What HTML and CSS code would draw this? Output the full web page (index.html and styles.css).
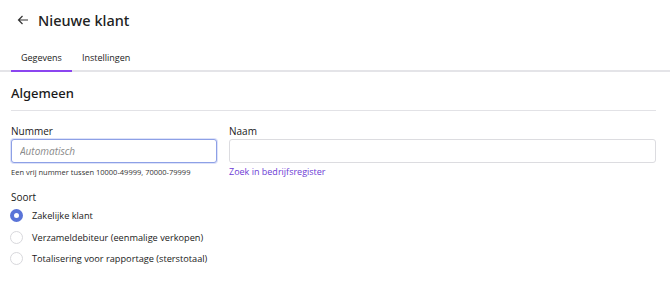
FILE: index.html
```html
<!DOCTYPE html>
<html lang="nl">
<head>
    <meta charset="UTF-8">
    <title>Nieuwe klant</title>
    <link rel="stylesheet" href="styles.css">
</head>
<body>
    <header class="page-header">
        <span class="back">
            <svg width="12" height="10" viewBox="0 0 12 10"><path d="M11 5H1.5M5.5 1L1.5 5l4 4" fill="none" stroke="#333" stroke-width="1.2"/></svg>
        </span>
        <h1>Nieuwe klant</h1>
    </header>

    <nav class="tabs">
        <span class="tab active">Gegevens</span>
        <span class="tab">Instellingen</span>
    </nav>

    <section class="section">
        <h2>Algemeen</h2>

        <div class="row">
            <div class="field nummer">
                <label>Nummer</label>
                <input class="input focused" type="text" placeholder="Automatisch">
                <div class="hint">Een vrij nummer tussen 10000-49999, 70000-79999</div>
            </div>
            <div class="field naam">
                <label>Naam</label>
                <input class="input" type="text">
                <a class="link">Zoek in bedrijfsregister</a>
            </div>
        </div>

        <div class="soort">
            <div class="soort-label">Soort</div>
            <div class="radio checked"><span class="dot"></span>Zakelijke klant</div>
            <div class="radio"><span class="dot"></span>Verzameldebiteur (eenmalige verkopen)</div>
            <div class="radio"><span class="dot"></span>Totalisering voor rapportage (sterstotaal)</div>
        </div>
    </section>
</body>
</html>
```

FILE: styles.css
```css
body {
    margin: 0;
    font-family: "Open Sans", "Noto Sans", sans-serif;
    color: #1a1a1a;
    background: #fff;
}

.page-header {
    display: flex;
    align-items: center;
    height: 40px;
    padding-left: 17px;
}

.back {
    display: flex;
    width: 12px;
    margin-right: 9px;
}

.page-header h1 {
    margin: 0;
    font-family: "Noto Sans", sans-serif;
    font-size: 14.5px;
    font-weight: 500;
    color: #222;
}

.tabs {
    display: flex;
    padding-left: 11px;
    margin-top: 8px;
    border-bottom: 2px solid #e4e4e8;
}

.tab {
    padding: 3px 10px 6px;
    font-size: 9px;
    color: #222;
    margin-bottom: -2px;
    border-bottom: 2px solid transparent;
}

.tab.active {
    border-bottom-color: #8b45f0;
}

.section {
    padding: 0 14px 0 11px;
}

.section h2 {
    margin: 0;
    padding: 12px 0 8px;
    font-family: "Noto Sans", sans-serif;
    font-size: 13px;
    font-weight: 500;
    border-bottom: 1px solid #e2e2e6;
}

.row {
    display: flex;
    gap: 12px;
    margin-top: 13px;
}

.field label {
    display: block;
    font-size: 10px;
    margin-bottom: 0;
}

.nummer { width: 206px; }
.naam { flex: 1; }

.input {
    box-sizing: border-box;
    width: 100%;
    height: 24px;
    border: 1px solid #dcdce0;
    border-radius: 3px;
    padding: 0 8px;
    font-family: inherit;
    font-size: 10px;
    font-style: italic;
    outline: none;
}

.input.focused {
    border-color: #8da0e6;
    box-shadow: 0 0 0 1px rgba(120, 140, 230, 0.25);
}

.input::placeholder { color: #8a8a8a; }

.hint {
    margin-top: 4px;
    font-size: 7.5px;
    color: #333;
}

.link {
    display: block;
    margin-top: 2px;
    font-size: 9px;
    color: #6c3bd5;
}

.soort {
    margin-top: 12px;
}

.soort-label {
    font-size: 10px;
    margin-bottom: 1px;
}

.radio {
    display: flex;
    align-items: center;
    height: 21.5px;
    font-size: 9.2px;
}

.dot {
    box-sizing: border-box;
    width: 13px;
    height: 13px;
    margin: 0 9px 0 -1px;
    border-radius: 50%;
    border: 1px solid #d8d8dc;
}

.radio.checked .dot {
    border: 4px solid #5a74d8;
    background: #fff;
}
```
